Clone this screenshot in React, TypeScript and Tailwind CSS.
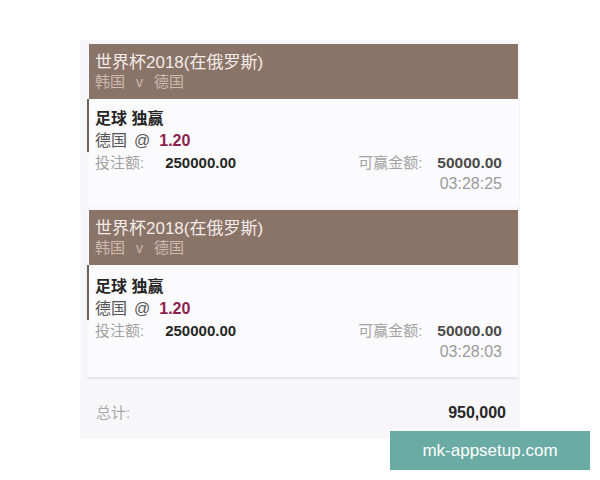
import React from "react";

const font = { fontFamily: '"Liberation Sans", "Noto Sans CJK SC", sans-serif' };

type Bet = { time: string; last?: boolean };

function Card({ time, last }: Bet) {
  return (
    <div className={`ml-[7px] mr-[2px] bg-[#fbfbfd] ${last ? "shadow-[0_2px_2px_rgba(0,0,0,0.08)]" : ""}`}>
      <div className="ml-[2px] h-[55px] bg-[#8a7468] pl-[6px] pt-[9px]">
        <div className="text-[17px] leading-[20px] text-[#f3ece8]">世界杯2018(在俄罗斯)</div>
        <div className="flex items-center text-[15px] leading-[18px] text-[#cdb9af]">
          <span>韩国</span>
          <span className="mx-[11px] text-[14px]">v</span>
          <span>德国</span>
        </div>
      </div>
      <div className={last ? "pb-[15px]" : "pb-[12px]"}>
        <div className={`border-l-2 border-[#6f625a] pl-[6px] ${last ? "pt-[11px]" : "pt-[9px]"}`}>
          <div className="text-[16px] font-bold leading-[22px] text-[#262626]">足球 独赢</div>
          <div className="flex items-center text-[16px] leading-[22px] text-[#555]">
            <span>德国</span>
            <span className="ml-[7px]">@</span>
            <span className="ml-[9px] font-bold text-[#8c1f4f]">1.20</span>
          </div>
        </div>
        <div className="flex items-center justify-between pl-[8px] pr-[16px] leading-[22px]">
          <div className="flex items-center">
            <span className="text-[15px] text-[#a3a3a3]">投注额:</span>
            <span className="ml-[21px] text-[15px] font-bold text-[#262626]">250000.00</span>
          </div>
          <div className="flex items-center">
            <span className="text-[15px] text-[#a3a3a3]">可赢金额:</span>
            <span className="ml-[15px] text-[15.5px] font-bold text-[#4a4a4a]">50000.00</span>
          </div>
        </div>
        <div className="pr-[16px] text-right text-[16px] leading-[20px] text-[#9a9a9a]">{time}</div>
      </div>
    </div>
  );
}

export default function App() {
  return (
    <div className="relative h-[480px] w-[600px] bg-white" style={font}>
      <div className="pl-[80px] pt-[40px]">
        <div className="flex h-[399px] w-[440px] flex-col bg-[#f7f7fa] pt-[4px]">
          <Card time="03:28:25" />
          <div className="h-[4px]" />
          <Card time="03:28:03" last />
          <div className="mt-[25px] flex items-center justify-between pl-[16px] pr-[14px] leading-[22px]">
            <span className="text-[15px] text-[#a8a8a8]">总计:</span>
            <span className="text-[16px] font-bold text-[#262626]">950,000</span>
          </div>
        </div>
      </div>
      <div className="absolute left-[390px] top-[431px] flex h-[39px] w-[200px] items-center justify-center bg-[#6aaba3] text-[17px] text-white">
        mk-appsetup.com
      </div>
    </div>
  );
}
